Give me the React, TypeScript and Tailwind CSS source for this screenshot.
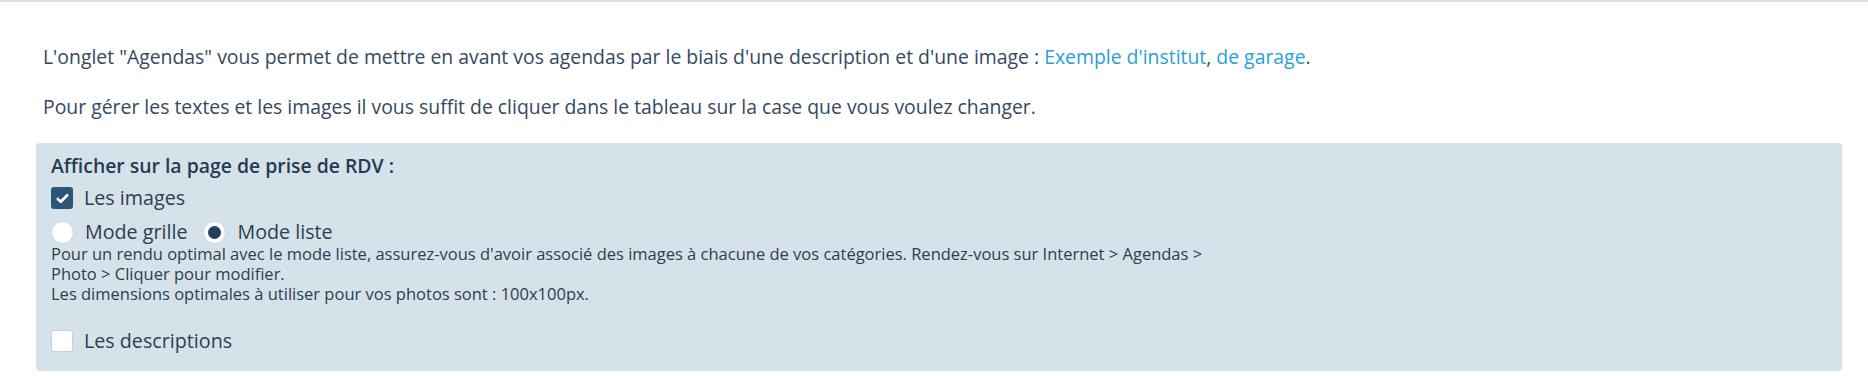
import React from "react";

function Checkbox({ checked }: { checked: boolean }) {
  return checked ? (
    <span className="flex h-[22px] w-[22px] shrink-0 items-center justify-center rounded-[3px] bg-[#2d5577]">
      <svg viewBox="0 0 16 16" className="h-[15px] w-[15px]" fill="none">
        <path d="M3 8.5l3.2 3L13 4.5" stroke="#fff" strokeWidth="2.8" strokeLinecap="round" strokeLinejoin="round" />
      </svg>
    </span>
  ) : (
    <span className="h-[22px] w-[22px] shrink-0 rounded-[3px] border border-[#c3d1dc] bg-white" />
  );
}

function Radio({ checked }: { checked: boolean }) {
  return (
    <span className="flex h-[23px] w-[23px] shrink-0 items-center justify-center rounded-full border border-[#c9d6e0] bg-white">
      {checked && <span className="h-[13px] w-[13px] rounded-full bg-[#233f5c]" />}
    </span>
  );
}

export default function App() {
  return (
    <div className="min-h-[376px] w-full border-t-2 border-[#d6e2ea] bg-white font-['Open_Sans',sans-serif] text-[#34495e]">
      <div className="pl-[43px] pt-[42px] text-[19.4px] leading-[26px]">
        <p>
          L'onglet "Agendas" vous permet de mettre en avant vos agendas par le biais d'une description et d'une image :{" "}
          <a className="text-[#2a9fd6]">Exemple d'institut</a>, <a className="text-[#2a9fd6]">de garage</a>.
        </p>
        <p className="mt-[24px]">
          Pour gérer les textes et les images il vous suffit de cliquer dans le tableau sur la case que vous voulez changer.
        </p>
      </div>

      <div className="ml-[36px] mt-[23px] w-[1806px] rounded-[4px] bg-[#d6e2ea] px-[15px] pb-[16px] pt-[10px] text-[#2c3e50]">
        <h3 className="text-[19.4px] font-semibold leading-[26px] text-[#263b52]">Afficher sur la page de prise de RDV :</h3>
        <label className="mt-[5px] flex items-center gap-[11px] text-[19.7px] leading-[28px]">
          <Checkbox checked />
          <span>Les images</span>
        </label>
        <div className="mt-[8px] flex items-center text-[19.7px] leading-[24px]">
          <label className="flex items-center gap-[11px]">
            <Radio checked={false} />
            <span>Mode grille</span>
          </label>
          <label className="ml-[16px] flex items-center gap-[11px]">
            <Radio checked />
            <span>Mode liste</span>
          </label>
        </div>
        <p className="text-[16.5px] leading-[20px]">
          Pour un rendu optimal avec le mode liste, assurez-vous d'avoir associé des images à chacune de vos catégories. Rendez-vous sur Internet &gt; Agendas &gt;
          <br />
          Photo &gt; Cliquer pour modifier.
          <br />
          Les dimensions optimales à utiliser pour vos photos sont : 100x100px.
        </p>
        <label className="mt-[23px] flex items-center gap-[11px] text-[19.7px] leading-[28px]">
          <Checkbox checked={false} />
          <span>Les descriptions</span>
        </label>
      </div>
    </div>
  );
}
